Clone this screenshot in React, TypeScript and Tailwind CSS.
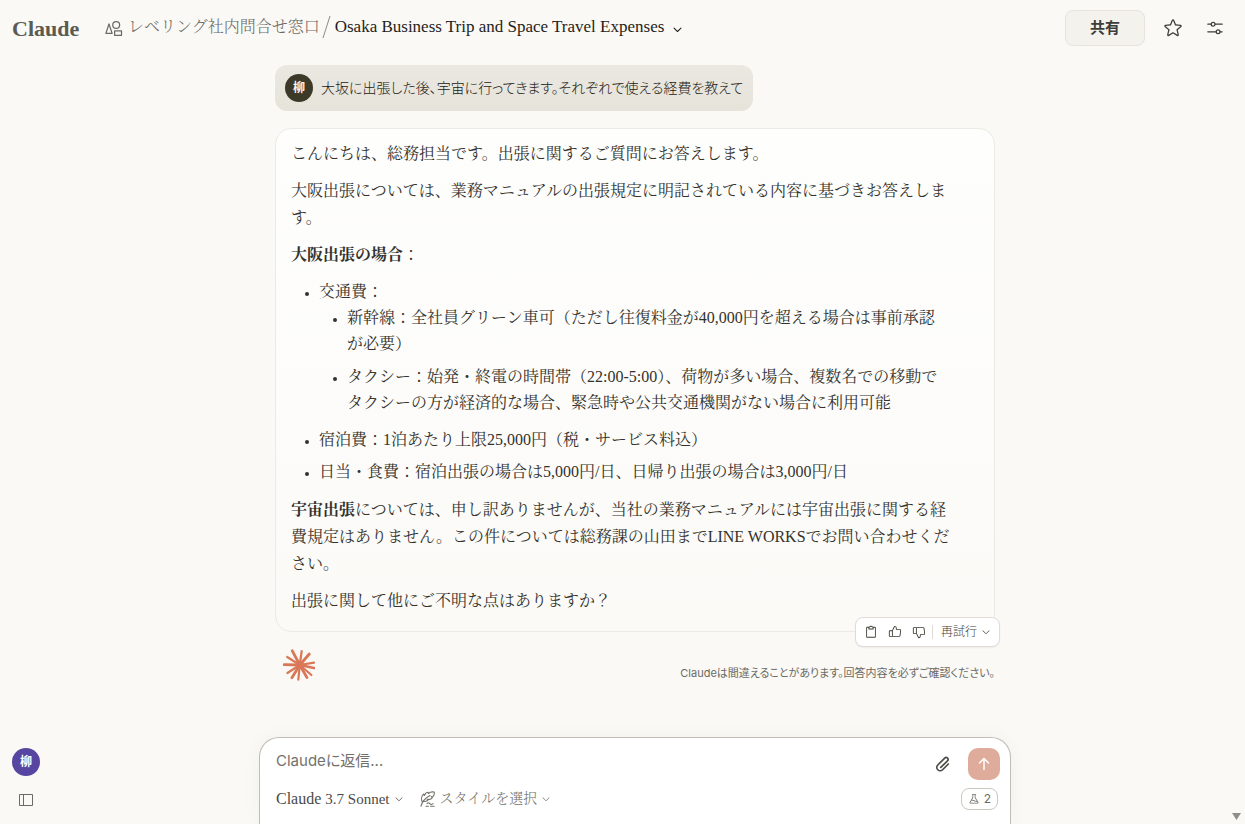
import { useState } from 'react';
import {
  PiArrowUpBold,
  PiCaretDown,
  PiCaretDownBold,
  PiClipboard,
  PiFlask,
  PiPaperclipBold,
  PiShapes,
  PiStar,
  PiThumbsDown,
  PiThumbsUp,
} from 'react-icons/pi';

const SERIF = "font-['Liberation_Serif','Noto_Serif_CJK_JP','Noto_Sans_CJK_JP',serif]";
const SANS = "font-['Inter','Noto_Sans_CJK_JP',sans-serif]";

const SlidersIcon = () => (
  <svg width="16" height="16" viewBox="0 0 16 16" fill="none" stroke="currentColor" strokeWidth="1.2" strokeLinecap="round" aria-hidden="true">
    <path d="M.8 4.2h3.4M8 4.2h7.2M.8 11.8h8.4M13 11.8h2.2" />
    <circle cx="6.1" cy="4.2" r="1.9" />
    <circle cx="11.1" cy="11.8" r="1.9" />
  </svg>
);

const PanelIcon = () => (
  <svg width="14" height="12" viewBox="0 0 14 12" fill="none" stroke="currentColor" aria-hidden="true">
    <path d="M.5.5h13v11H.5zM4.5.5v11" />
  </svg>
);

const QuillIcon = () => (
  <svg width="16" height="16" viewBox="0 0 16 16" fill="none" stroke="currentColor" strokeWidth="1.1" strokeLinecap="round" strokeLinejoin="round" aria-hidden="true">
    <path d="M1 15.2C2 11.2 5 7.2 10 4.6" />
    <path d="M2.4 11C.8 8.400 1.400 5 3.800 3l.8 1.400C5 2.600 6.500 1.400 8 1.200l.4 1.300C10 .9 12 .6 14.200 1c.3 1.600 0 3.200-1 4.300l-1.900.2 1.100 1.100c-.9 1.300-2.200 1.900-3.700 2l-1.500-.4.4 1.300c-1.300.9-2.900 1.200-4.300.9" />
    <path d="M7 12.600c1.200-1.200 2-1.200 2.800 0s1.600 1.200 3.200 0M6 15.200h2.500M10.500 15.200h3.700" />
  </svg>
);

const rays = [
  [9.3, 1.8], [18.7, 2], [26.3, 5], [31, 13.7], [31, 19], [28.4, 26],
  [24, 28.6], [15.3, 30.6], [8.9, 28.8], [4.4, 24], [1.2, 15.7], [4.2, 8],
];

const Starburst = () => (
  <svg className="text-[#d97757]" width="32" height="32" viewBox="0 0 32 32" fill="none" stroke="currentColor" strokeLinecap="round" aria-hidden="true">
    {rays.map(([x, y], i) => (
      <path key={i} d={`M16.8 16L${x} ${y}`} strokeWidth={i % 2 ? 2.2 : 2.8} />
    ))}
    <circle cx="16.8" cy="16" r="4" fill="currentColor" stroke="none" />
  </svg>
);

const Header = () => (
  <header className="flex h-14 items-center justify-between pl-3 pr-4">
    <div className={`flex items-center ${SERIF}`}>
      <a href="#home" className="w-[92px] pt-0.5 text-[22px] font-bold leading-7 text-[#5b5a53]">Claude</a>
      <nav className="flex items-center pb-0.5 text-base">
        <a href="#project" className="flex items-center gap-1 text-[#6b6a64]">
          <PiShapes className="mt-1 size-5" />
          <span className="font-light">レベリング社内問合せ窓口</span>
        </a>
        <svg className="ml-0.5 mr-1 text-[#8d8b83]" width="9" height="24" viewBox="0 0 9 24" stroke="currentColor" aria-hidden="true">
          <path d="M8 1L1 23" />
        </svg>
        <button type="button" className="flex items-center gap-2 text-[17px] text-[#1f1e1b]">
          Osaka Business Trip and Space Travel Expenses
          <PiCaretDownBold className="mt-1 size-[11px]" />
        </button>
      </nav>
    </div>
    <div className="flex items-center text-[#3d3d3a]">
      <button type="button" className={`h-9 w-20 rounded-lg border border-[#e5e3dc] bg-[#f3f2ed] text-[15px] font-bold ${SANS}`}>
        共有
      </button>
      <button type="button" aria-label="お気に入り" className="ml-[18px]"><PiStar className="size-5" /></button>
      <button type="button" aria-label="設定" className="ml-6 mr-1.5"><SlidersIcon /></button>
    </div>
  </header>
);

const UserMessage = () => (
  <div className={`flex w-fit items-center gap-2 rounded-xl bg-linear-to-b from-[#eae8e1] to-[#e6e3da] py-[9px] pl-2.5 pr-2.5 ${SANS}`}>
    <div className="flex size-7 items-center justify-center rounded-full bg-[#3d3929] text-xs font-bold text-[#f5f4ef]">柳</div>
    <p className="text-sm font-light leading-7 text-[#1c1a13] [font-feature-settings:'palt']">
      大坂に出張した後、宇宙に行ってきます。それぞれで使える経費を教えて
    </p>
  </div>
);

const AssistantMessage = () => (
  <article className={`relative rounded-2xl border border-[#eceae4] bg-linear-to-b from-[#fefefd] to-[#fbfaf7] pb-[17px] pl-[15px] pr-[43px] pt-[11px] text-base text-[#33322c] ${SERIF}`}>
    <div className="flex flex-col gap-2.5 leading-[27px]">
      <p>こんにちは、総務担当です。出張に関するご質問にお答えします。</p>
      <p>大阪出張については、業務マニュアルの出張規定に明記されている内容に基づきお答えします。</p>
      <p><strong>大阪出張の場合</strong>：</p>
      <ul className="flex list-disc flex-col gap-1.5 py-px pl-7 pr-0.5 leading-[26px] marker:text-[12px]">
        <li>
          交通費：
          <ul className="mb-[5px] flex list-disc flex-col gap-[7px] pl-7">
            <li>新幹線：全社員グリーン車可（ただし往復料金が40,000円を超える場合は事前承認が必要）</li>
            <li>タクシー：始発・終電の時間帯（22:00-5:00）、荷物が多い場合、複数名での移動でタクシーの方が経済的な場合、緊急時や公共交通機関がない場合に利用可能</li>
          </ul>
        </li>
        <li>宿泊費：1泊あたり上限25,000円（税・サービス料込）</li>
        <li>日当・食費：宿泊出張の場合は5,000円/日、日帰り出張の場合は3,000円/日</li>
      </ul>
      <p>
        <strong>宇宙出張</strong>については、申し訳ありませんが、当社の業務マニュアルには宇宙出張に関する経費規定はありません。この件については総務課の山田までLINE WORKSでお問い合わせください。
      </p>
      <p>出張に関して他にご不明な点はありますか？</p>
    </div>

    <div className={`absolute -bottom-4 -right-1.5 flex h-[30px] items-center rounded-lg border border-[#dedcd4] bg-white px-2 text-xs font-light text-[#3f3d34] shadow-xs ${SANS}`}>
      <div className="flex items-center gap-2.5 border-r border-[#dedcd4] pr-1.5">
        <button type="button" aria-label="コピー"><PiClipboard className="size-3.5" /></button>
        <button type="button" aria-label="良い回答"><PiThumbsUp className="size-3.5" /></button>
        <button type="button" aria-label="悪い回答"><PiThumbsDown className="size-3.5" /></button>
      </div>
      <button type="button" className="flex items-center gap-1 pl-2">
        再試行
        <PiCaretDown className="size-2.5" />
      </button>
    </div>
  </article>
);

const Composer = () => {
  const [message, setMessage] = useState('');

  return (
    <form
      className="mt-auto flex h-[87px] w-full max-w-[752px] flex-col justify-between rounded-t-[20px] border border-b-0 border-[#bfbdb5] bg-white pb-3.5 pl-4 pr-2.5 pt-2.5 shadow-[0_0_20px_rgba(0,0,0,0.04)]"
      onSubmit={(e) => e.preventDefault()}
    >
      <div className="flex items-center">
        <input
          type="text"
          aria-label="Claudeに返信"
          placeholder="Claudeに返信..."
          value={message}
          onChange={(e) => setMessage(e.target.value)}
          className={`h-8 min-w-0 flex-1 bg-transparent pb-2 text-[15px] outline-none [font-feature-settings:'palt'] placeholder:text-[#73716a] ${SANS}`}
        />
        <button type="button" aria-label="ファイルを添付" className="mr-4 text-[#4c4b45]"><PiPaperclipBold className="size-[18px]" /></button>
        <button type="submit" aria-label="送信" className="flex size-8 items-center justify-center rounded-[10px] bg-[#dfab9b] text-white">
          <PiArrowUpBold className="size-4" />
        </button>
      </div>
      <div className="flex h-[22px] items-center justify-between">
        <div className={`flex items-center text-[15px] text-[#4c4b45] ${SERIF}`}>
          <label htmlFor="model" className="mr-1 text-base">Claude</label>
          <div className="flex items-center gap-1">
            <select id="model" className="appearance-none bg-transparent outline-none [field-sizing:content]">
              <option>3.7 Sonnet</option>
            </select>
            <PiCaretDown className="size-2.5" />
          </div>
          <div className="ml-4 flex items-center gap-1 text-[#73716a]">
            <QuillIcon />
            <select aria-label="スタイル" className="appearance-none bg-transparent text-sm font-light outline-none [field-sizing:content]">
              <option>スタイルを選択</option>
            </select>
            <PiCaretDown className="size-2.5" />
          </div>
        </div>
        <button type="button" className={`mr-0.5 flex h-[22px] w-[37px] items-center justify-center gap-1 rounded-lg border border-[#c9c7bf] text-xs text-[#6b6a64] ${SANS}`}>
          <PiFlask className="size-3" />
          2
        </button>
      </div>
    </form>
  );
};

export default function App() {
  return (
    <div className="relative flex min-h-screen flex-col bg-[#faf9f5]">
      <Header />
      <div className="flex flex-1 pr-[15px]">
        <aside className="flex w-10 shrink-0 flex-col items-end justify-end gap-[18px] pb-[18px]">
          <button type="button" className={`flex size-7 items-center justify-center rounded-full bg-[#5645a1] text-xs font-bold text-white ${SANS}`}>
            柳
          </button>
          <button type="button" aria-label="サイドバーを開く" className="mr-[7px] text-[#6b6a64]"><PanelIcon /></button>
        </aside>
        <main className="flex min-w-0 flex-1 flex-col items-center pt-[9px]">
          <div className="mb-12 flex w-full max-w-[720px] flex-col gap-[17px]">
            <UserMessage />
            <AssistantMessage />
            <div className="flex items-center justify-between pl-2">
              <Starburst />
              <p className={`pt-4 text-[11px] text-[#6b6a64] [font-feature-settings:'palt'] ${SANS}`}>
                Claudeは間違えることがあります。回答内容を必ずご確認ください。
              </p>
            </div>
          </div>
          <Composer />
        </main>
      </div>
      <svg className="absolute bottom-1 right-1 text-[#8f8e88]" width="9" height="7" viewBox="0 0 9 7" fill="currentColor" aria-hidden="true">
        <path d="M0 0h9L4.5 7z" />
      </svg>
    </div>
  );
}
